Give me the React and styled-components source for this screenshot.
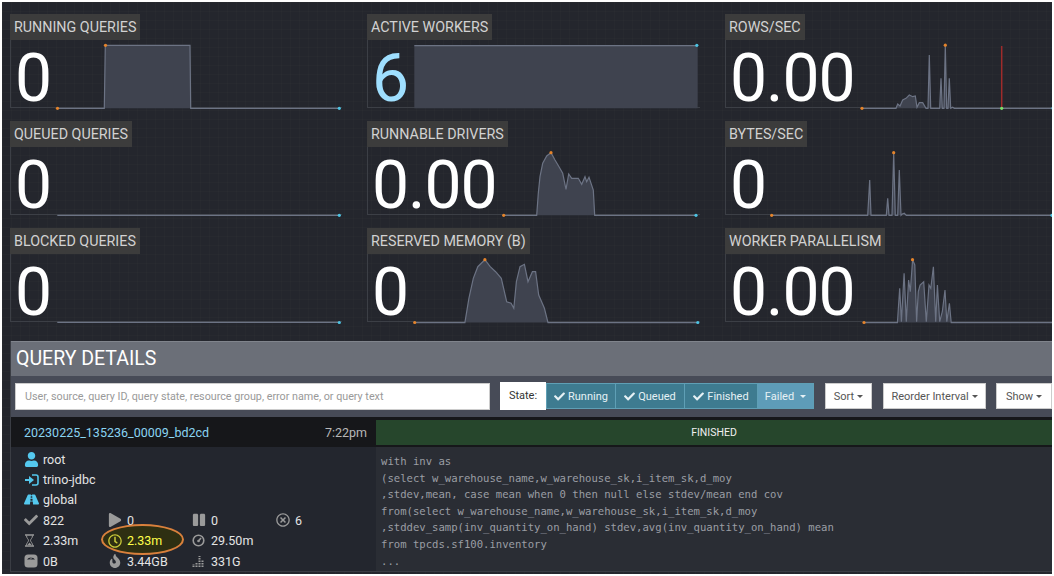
import React from 'react'
import styled, { createGlobalStyle } from 'styled-components'
import {
  FaCheck, FaPlay, FaPause, FaUser, FaRoad, FaFire, FaRegClock, FaRegTimesCircle,
} from 'react-icons/fa'

const GlobalStyle = createGlobalStyle`
  html, body {
    margin: 0;
    background: #fff;
  }
  * {
    box-sizing: border-box;
  }
`

const Page = styled.div`
  width: 1054px;
  height: 576px;
  padding: 2px;
  overflow: hidden;
  font-family: Roboto, "Liberation Sans", sans-serif;
`

const Screen = styled.div`
  height: 572px;
  overflow: hidden;
  background-color: #24262d;
  background-image:
    linear-gradient(rgba(255, 255, 255, 0.012) 1px, transparent 1px),
    linear-gradient(90deg, rgba(255, 255, 255, 0.012) 1px, transparent 1px);
  background-size: 9px 9px;
  padding: 12px 0 0 8px;
`

const TileGrid = styled.div`
  display: grid;
  grid-template-columns: 357px 358px 1fr;
  row-gap: 13px;
  margin-bottom: 19px;
`

const Tile = styled.div`
  height: 94px;
  min-width: 0;
`

const TileLabel = styled.div`
  display: inline-block;
  vertical-align: top;
  height: 26px;
  padding: 0 4px;
  line-height: 26px;
  font-size: 14.3px;
  color: #d2d2d2;
  background: #3c3c3c;
`

const TileBody = styled.div`
  display: inline-flex;
  height: 68px;
  border-left: 1px solid #3c3f46;
  border-bottom: 1px solid #3c3f46;
`

const TileNumber = styled.div`
  padding: 0 6px 0 4px;
  font-size: 66px;
  letter-spacing: -1px;
  line-height: 78px;
  color: ${p => (p.$accent ? '#9fdfff' : '#fff')};
`

const Chart = styled.svg`
  flex: none;
  display: block;
  overflow: visible;
`

const Panel = styled.div`
  border-left: 1px solid #3a3d44;
  border-bottom: 1px solid #3a3d44;
`

const PanelTitle = styled.div`
  height: 35px;
  padding-left: 5px;
  line-height: 33px;
  font-size: 19.5px;
  color: #fff;
  background: #6b6f78;
  border-top: 1px solid #80848c;
`

const Toolbar = styled.div`
  display: flex;
  align-items: center;
  height: 41px;
  padding: 6px 0 7px 4px;
  background: #474b57;
`

const SearchInput = styled.input`
  width: 475px;
  height: 27px;
  margin-right: 10px;
  padding: 0 9px;
  border: 1px solid #ccc;
  background: #fff;
  font-family: inherit;
  font-size: 10.75px;
  outline: none;
  &::placeholder {
    color: #999;
  }
`

const StateLabel = styled.div`
  width: 46px;
  height: 28px;
  line-height: 27px;
  text-align: center;
  font-size: 11px;
  color: #333;
  background: #fff;
`

const StateButton = styled.div`
  display: flex;
  align-items: center;
  justify-content: center;
  gap: 3px;
  width: ${p => p.$w}px;
  height: 26px;
  font-size: 11px;
  color: #e6f1f5;
  background: ${p => (p.$on ? '#3e7b90' : '#5e9cb8')};
  border: 1px solid #5f9fb5;
  border-left-width: ${p => (p.$first ? 1 : 0)}px;
`

const Caret = styled.span`
  display: inline-block;
  width: 0;
  height: 0;
  margin-left: 3px;
  border-top: 3px solid currentColor;
  border-left: 3px solid transparent;
  border-right: 3px solid transparent;
`

const MenuButton = styled.div`
  flex: none;
  display: flex;
  align-items: center;
  justify-content: center;
  width: ${p => p.$w}px;
  height: 26px;
  margin-left: ${p => p.$gap}px;
  font-size: 11px;
  color: #555;
  background: #fff;
  border: 1px solid #ccc;
`

const QueryHead = styled.div`
  display: grid;
  grid-template-columns: 365px 1fr;
  height: 30px;
  padding: 3px 0 2px;
  background: #16171a;
`

const QueryId = styled.div`
  display: flex;
  align-items: center;
  justify-content: space-between;
  padding: 0 9px 0 13px;
  font-size: 12.5px;
  color: #8ad4f2;
`

const QueryTime = styled.span`
  color: #b8b8b8;
`

const QueryState = styled.div`
  line-height: 25px;
  text-align: center;
  font-size: 10.5px;
  color: #f0f0f0;
  background: #26462c;
`

const QueryBody = styled.div`
  display: grid;
  grid-template-columns: 365px 1fr;
  height: 124px;
  background: #23262e;
`

const Info = styled.div`
  padding: 2px 0 0 13px;
`

const InfoRow = styled.div`
  display: flex;
  align-items: center;
  height: 20.4px;
  font-size: 12.5px;
  color: #e4e4e4;
`

const InfoIcon = styled.span`
  display: flex;
  align-items: center;
  width: 19px;
  font-size: 15px;
  color: #54c8ee;
`

const StatRow = styled.div`
  display: grid;
  grid-template-columns: repeat(4, 84px);
  height: 20.4px;
`

const Stat = styled.div`
  position: relative;
  display: flex;
  align-items: center;
  font-size: 12.5px;
  color: ${p => (p.$hot ? '#ffff4a' : '#e4e4e4')};
  ${p => p.$hot && `
    &::before {
      content: "";
      position: absolute;
      left: -7px;
      top: -7px;
      width: 79px;
      height: 27px;
      border: 2px solid #d9803c;
      border-radius: 50%;
      background: #2e2f12;
    }
  `}
`

const StatIcon = styled.span`
  position: relative;
  display: flex;
  align-items: center;
  width: 19px;
  font-size: 14px;
  color: ${p => (p.$hot ? '#c9c93a' : '#9a9a9a')};
`

const StatText = styled.span`
  position: relative;
`

const SqlText = styled.pre`
  margin: 0;
  padding: 6px 0 0 5px;
  background: #2a2d34;
  font-family: "DejaVu Sans Mono", "Liberation Mono", monospace;
  font-size: 10.6px;
  line-height: 16.6px;
  color: #9b9ea4;
`

// points come in as measured on the 3x crops of the screen
const at = (ox, oy, sx, list) => list.map(([x, y]) => [ox + x / sx, oy + y / 3])
const line = pts => pts.map(([x, y], i) => `${i ? 'L' : 'M'}${x.toFixed(1)} ${y.toFixed(1)}`).join(' ')

function Spark({ top, left, right, points, base, high, start, end, marker }) {
  const first = points[0]
  const last = points[points.length - 1]
  const fill = `M${first[0]} ${base} ${line(points).replace('M', 'L')} L${last[0]} ${base} Z`
  return (
    <Chart width={right - left} height={67} viewBox={`${left} ${top} ${right - left} 67`}>
      <path d={fill} fill="#3f434f" />
      <path d={line(points)} fill="none" stroke="#6c7384" strokeWidth="1.2" />
      {marker && <path d={`M${marker} ${base} V${top + 6}`} stroke="#9e2b2b" strokeWidth="1.5" />}
      {start && <circle cx={start[0]} cy={start[1]} r="1.6" fill="#e5842b" />}
      {high && <circle cx={high[0]} cy={high[1]} r="1.6" fill="#e5842b" />}
      {end && <circle cx={end[0]} cy={end[1]} r="1.6" fill="#4cc4e4" />}
      {marker && <circle cx={marker} cy={base} r="1.6" fill="#7be06a" />}
    </Chart>
  )
}

const tiles = [
  {
    label: 'RUNNING QUERIES', value: '0', top: 40, left: 57, right: 342, base: 108.3,
    points: at(0, 0, 3, [[172, 325], [313, 325], [316, 136], [570, 136], [572, 325], [1018, 325]]),
    start: [57.5, 108.3], high: [105.5, 45.3], end: [339.3, 108.3],
  },
  {
    label: 'ACTIVE WORKERS', value: '6', accent: true, top: 40, left: 414, right: 700, base: 108.3,
    points: at(360, 0, 3, [[163, 137], [1013, 137]]),
    end: [696.8, 45.3],
  },
  {
    label: 'ROWS/SEC', value: '0.00', top: 40, left: 860, right: 1054, base: 108.3,
    points: at(715, 0, 3, [[438, 325], [540, 325], [545, 312], [552, 318], [560, 300], [570, 295], [580, 285], [590, 290], [598, 288], [603, 322], [610, 308], [620, 308], [630, 325], [636, 325], [640, 165], [644, 325], [671, 325], [675, 235], [679, 325], [684, 325], [688, 135], [692, 325], [696, 325], [700, 235], [704, 325], [710, 322], [715, 325], [1020, 325]]),
    start: [861, 108.3], high: [944.3, 45.2], end: [1052, 108.3], marker: 1000.7,
  },
  {
    label: 'QUEUED QUERIES', value: '0', top: 147, left: 57, right: 342, base: 215.3,
    points: at(0, 0, 3, [[172, 646], [1018, 646]]),
    end: [339.3, 215.3],
  },
  {
    label: 'RUNNABLE DRIVERS', value: '0.00', top: 147, left: 503, right: 700, base: 215.3,
    points: at(360, 0, 3, [[431, 646], [530, 646], [535, 580], [540, 530], [548, 490], [560, 468], [573, 458], [585, 480], [597, 500], [608, 520], [618, 568], [626, 522], [635, 535], [655, 535], [665, 553], [675, 530], [680, 545], [687, 532], [700, 570], [704, 646], [1008, 646]]),
    start: [503.7, 215.3], high: [551, 152.7], end: [696, 215.3],
  },
  {
    label: 'BYTES/SEC', value: '0', top: 147, left: 772, right: 1054, base: 215.3,
    points: at(715, 0, 3, [[170, 646], [458, 646], [464, 540], [468, 646], [514, 646], [518, 595], [522, 646], [531, 646], [536, 458], [541, 646], [548, 646], [553, 510], [558, 646], [562, 642], [568, 640], [574, 646], [1020, 646]]),
    start: [771.7, 215.3], high: [893.7, 152.7], end: [1052, 215.3],
  },
  {
    label: 'BLOCKED QUERIES', value: '0', top: 254, left: 57, right: 342, base: 322.5,
    points: at(0, 0, 3, [[172, 967], [1018, 967]]),
    end: [339.3, 322.5],
  },
  {
    label: 'RESERVED MEMORY (B)', value: '0', top: 254, left: 414, right: 700, base: 322.5,
    points: at(360, 225, 2.25, [[123, 293], [236, 293], [245, 220], [255, 160], [265, 125], [281, 104], [293, 125], [305, 140], [318, 160], [330, 230], [340, 235], [346, 250], [352, 170], [360, 125], [370, 118], [378, 170], [388, 140], [395, 140], [402, 210], [415, 250], [423, 293], [760, 293]]),
    start: [414.7, 322.5], high: [484.9, 259.7], end: [697.8, 322.5],
  },
  {
    label: 'WORKER PARALLELISM', value: '0.00', top: 254, left: 860, right: 1054, base: 322.5,
    points: at(360, 225, 2.25, [[1132, 293], [1207, 293], [1212, 190], [1216, 290], [1222, 145], [1227, 290], [1232, 165], [1236, 200], [1241, 104], [1246, 120], [1250, 290], [1254, 200], [1258, 180], [1266, 170], [1272, 290], [1278, 180], [1282, 190], [1288, 125], [1293, 290], [1297, 180], [1302, 290], [1308, 260], [1314, 195], [1318, 290], [1324, 235], [1328, 293], [1563, 293]]),
    start: [863, 322.5], high: [911.5, 259.7],
  },
]

const LogInIcon = () => (
  <svg width="15" height="14" viewBox="0 0 15 14">
    <path d="M8 2h4a2 2 0 0 1 2 2v6a2 2 0 0 1-2 2H8" fill="none" stroke="currentColor" strokeWidth="1.6" />
    <path d="M1 6h4V3l5 4-5 4V8H1z" fill="currentColor" />
  </svg>
)

const HourglassIcon = () => (
  <svg width="11" height="13" viewBox="0 0 11 13">
    <path d="M1 1h9M1 12h9" stroke="currentColor" strokeWidth="1.4" />
    <path d="M2.5 1.5c0 3 2 3.5 2 5s-2 2-2 5M8.5 1.5c0 3-2 3.500-2 5s2 2 2 5" fill="none" stroke="currentColor" />
    <path d="M3.500 11l2-2.500 2 2.500z" fill="currentColor" />
  </svg>
)

const DialIcon = () => (
  <svg width="13" height="13" viewBox="0 0 13 13">
    <circle cx="6.500" cy="6.500" r="5.300" fill="none" stroke="currentColor" strokeWidth="1.600" />
    <path d="M6.500 7l2.500-3" stroke="currentColor" strokeWidth="1.600" />
    <circle cx="6.500" cy="7" r="1.300" fill="currentColor" />
  </svg>
)

const ScaleIcon = () => (
  <svg width="14" height="14" viewBox="0 0 14 14">
    <rect x="0.500" y="0.500" width="13" height="13" rx="3.500" fill="currentColor" />
    <path d="M3 5.500a4.500 3.500 0 0 1 8 0z" fill="#23262e" />
    <path d="M6 5.500l2-2" stroke="currentColor" />
  </svg>
)

const DotBars = () => (
  <svg width="13" height="12" viewBox="0 0 13 12">
    <path d="M1.500 12V9M4.500 12V7M7.500 12V1M10.500 12V5" fill="none" stroke="currentColor" strokeWidth="2" strokeDasharray="1.500 1" />
  </svg>
)

const sql = `with inv as
(select w_warehouse_name,w_warehouse_sk,i_item_sk,d_moy
,stdev,mean, case mean when 0 then null else stdev/mean end cov
from(select w_warehouse_name,w_warehouse_sk,i_item_sk,d_moy
,stddev_samp(inv_quantity_on_hand) stdev,avg(inv_quantity_on_hand) mean
from tpcds.sf100.inventory
...`

export default function App() {
  return (
    <Page>
      <GlobalStyle />
      <Screen>
        <TileGrid>
          {tiles.map(t => (
            <Tile key={t.label}>
              <TileLabel>{t.label}</TileLabel>
              <TileBody>
                <TileNumber $accent={t.accent}>{t.value}</TileNumber>
                <Spark {...t} />
              </TileBody>
            </Tile>
          ))}
        </TileGrid>
        <Panel>
          <PanelTitle>QUERY DETAILS</PanelTitle>
          <Toolbar>
            <SearchInput placeholder="User, source, query ID, query state, resource group, error name, or query text" />
            <StateLabel>State:</StateLabel>
            <StateButton $on $first $w={70}><FaCheck size={11} />Running</StateButton>
            <StateButton $on $w={69}><FaCheck size={11} />Queued</StateButton>
            <StateButton $on $w={73}><FaCheck size={11} />Finished</StateButton>
            <StateButton $w={56}>Failed<Caret /></StateButton>
            <MenuButton $w={47} $gap={11}>Sort<Caret /></MenuButton>
            <MenuButton $w={103} $gap={11}>Reorder Interval<Caret /></MenuButton>
            <MenuButton $w={56} $gap={10}>Show<Caret /></MenuButton>
          </Toolbar>
          <QueryHead>
            <QueryId>
              20230225_135236_00009_bd2cd
              <QueryTime>7:22pm</QueryTime>
            </QueryId>
            <QueryState>FINISHED</QueryState>
          </QueryHead>
          <QueryBody>
            <Info>
              <InfoRow><InfoIcon><FaUser /></InfoIcon>root</InfoRow>
              <InfoRow><InfoIcon><LogInIcon /></InfoIcon>trino-jdbc</InfoRow>
              <InfoRow><InfoIcon><FaRoad /></InfoIcon>global</InfoRow>
              <StatRow>
                <Stat><StatIcon><FaCheck /></StatIcon>822</Stat>
                <Stat><StatIcon><FaPlay /></StatIcon>0</Stat>
                <Stat><StatIcon><FaPause /></StatIcon>0</Stat>
                <Stat><StatIcon><FaRegTimesCircle /></StatIcon>6</Stat>
              </StatRow>
              <StatRow>
                <Stat><StatIcon><HourglassIcon /></StatIcon>2.33m</Stat>
                <Stat $hot><StatIcon $hot><FaRegClock /></StatIcon><StatText>2.33m</StatText></Stat>
                <Stat><StatIcon><DialIcon /></StatIcon>29.50m</Stat>
              </StatRow>
              <StatRow>
                <Stat><StatIcon><ScaleIcon /></StatIcon>0B</Stat>
                <Stat><StatIcon><FaFire /></StatIcon>3.44GB</Stat>
                <Stat><StatIcon><DotBars /></StatIcon>331G</Stat>
              </StatRow>
            </Info>
            <SqlText>{sql}</SqlText>
          </QueryBody>
        </Panel>
      </Screen>
    </Page>
  )
}
